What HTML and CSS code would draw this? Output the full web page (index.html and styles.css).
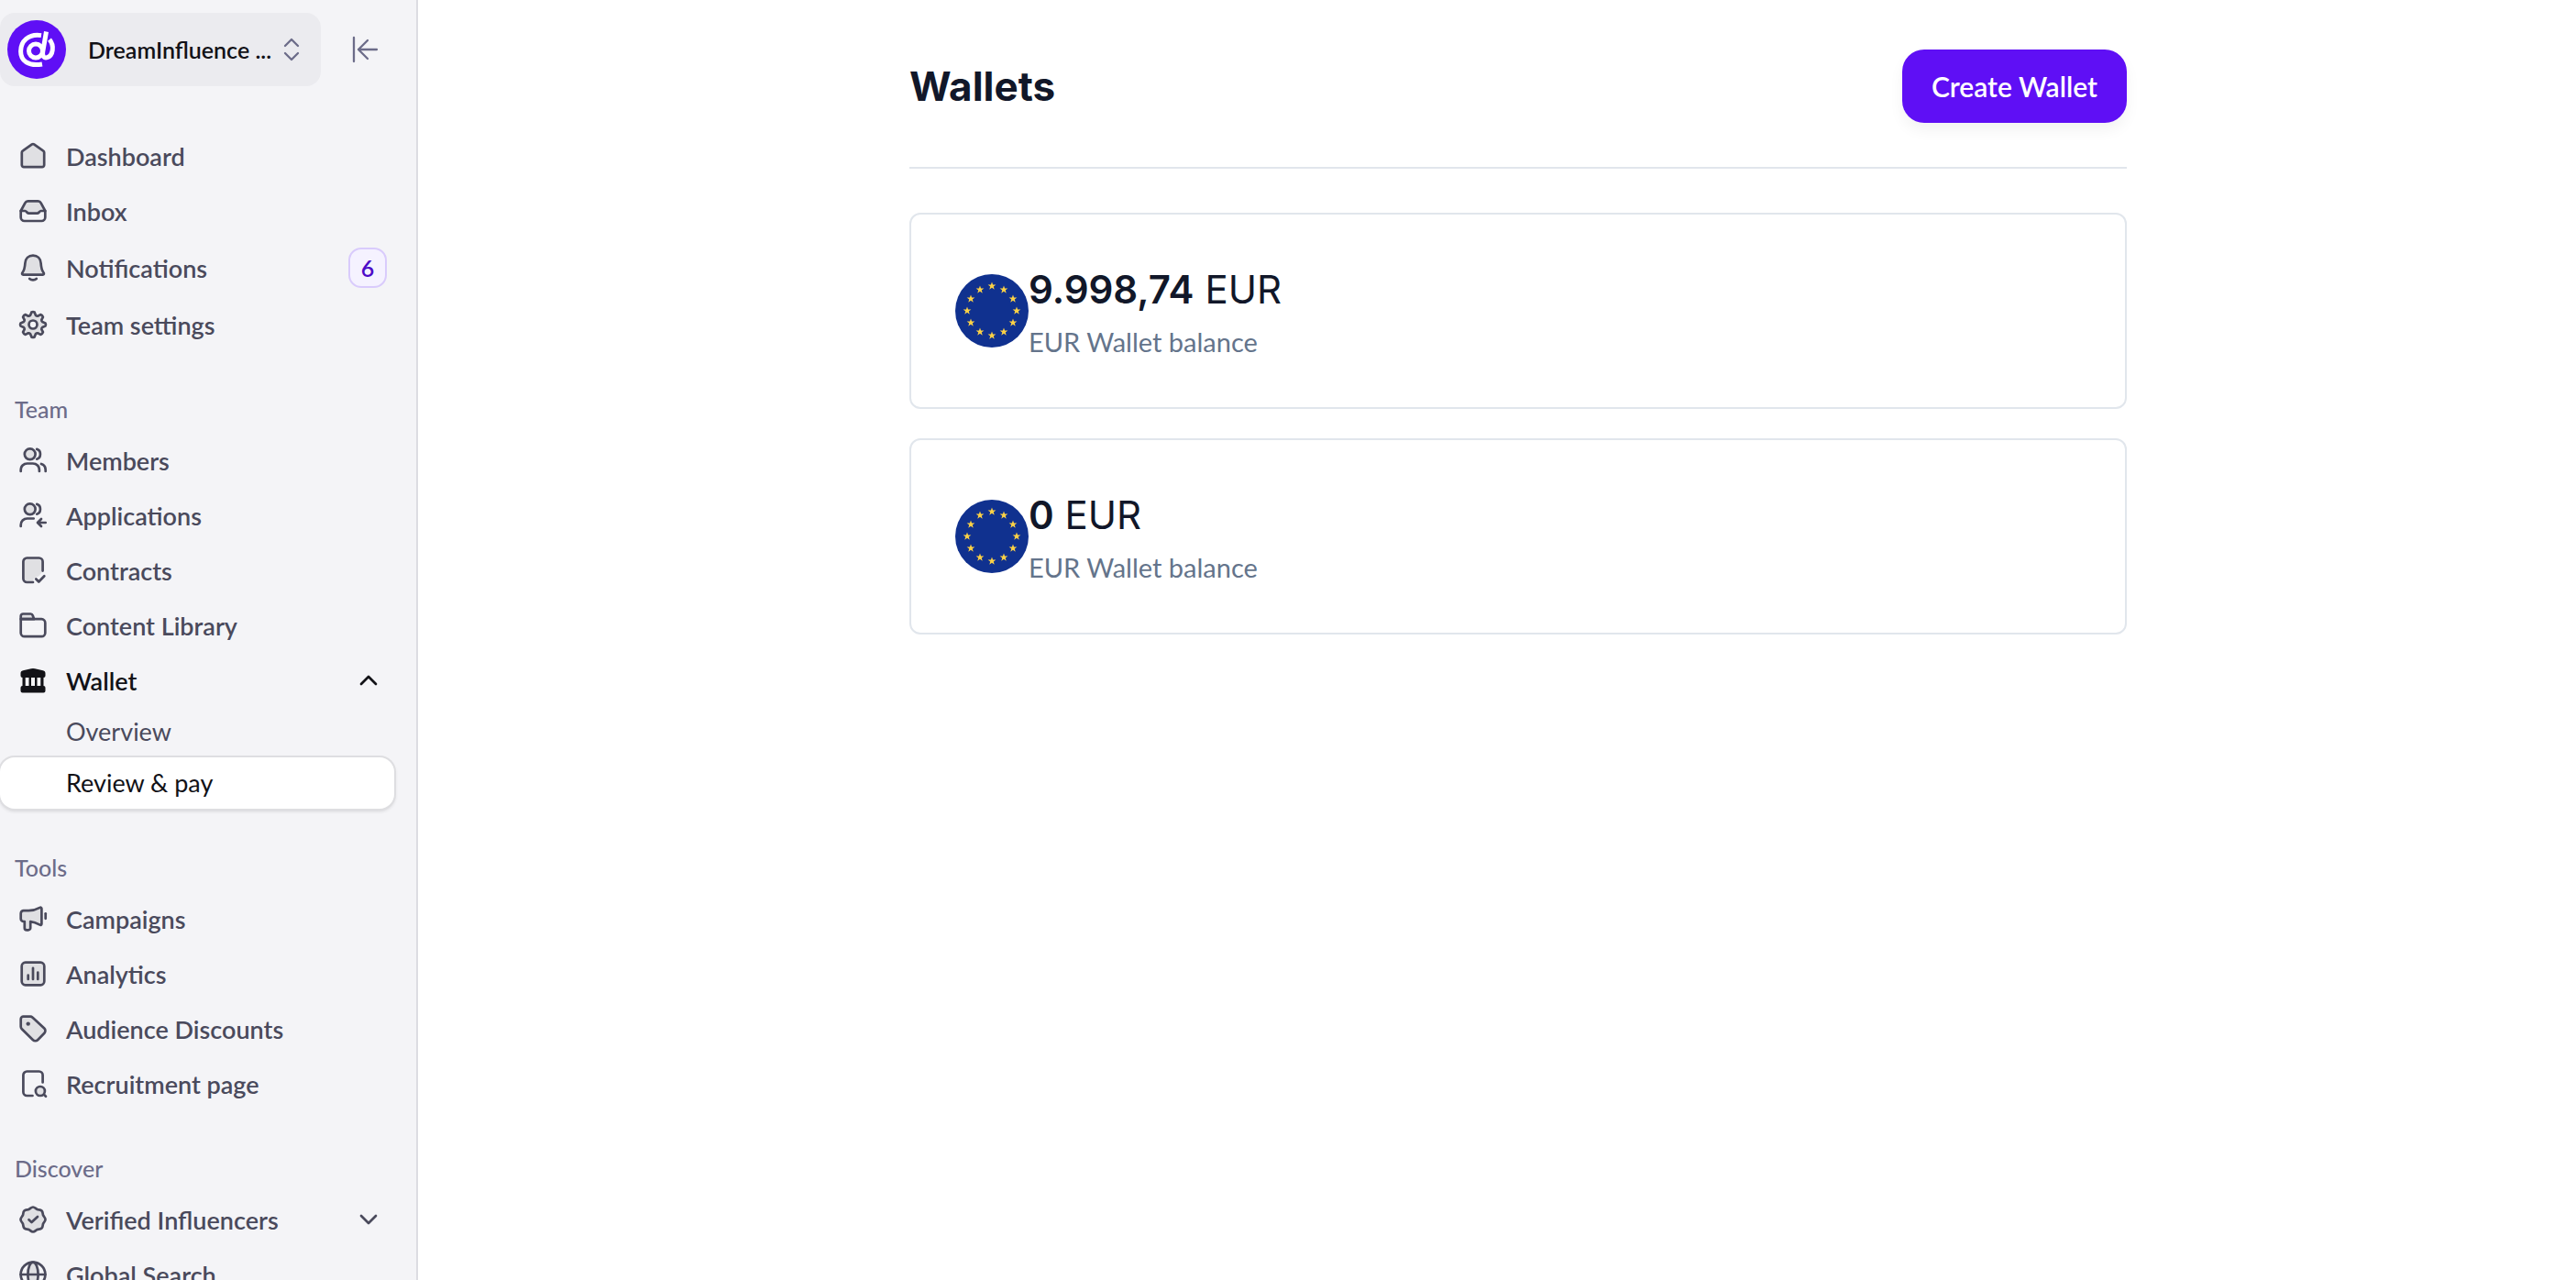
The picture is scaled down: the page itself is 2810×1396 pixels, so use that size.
FILE: index.html
```
<!DOCTYPE html>
<html lang="en">
<head>
  <meta charset="UTF-8">
  <title>Wallets</title>
  <link rel="stylesheet" href="styles.css">
</head>
<body>

<!-- star shared by both flags -->
<svg class="defs" aria-hidden="true">
  <defs>
    <path id="star" d="M0-4.6 1.1-1.5H4.4L1.8.5 2.7 3.7 0 1.8-2.7 3.7-1.8.5-4.4-1.5H-1.1z"/>
    <g id="eu-flag">
      <circle cx="40" cy="40" r="40" fill="#10318f"/>
      <g fill="#fbd146">
        <use href="#star" x="40" y="13"/>
        <use href="#star" x="53" y="17"/>
        <use href="#star" x="63" y="27"/>
        <use href="#star" x="67" y="40"/>
        <use href="#star" x="63" y="53"/>
        <use href="#star" x="53" y="63"/>
        <use href="#star" x="40" y="67"/>
        <use href="#star" x="27" y="63"/>
        <use href="#star" x="17" y="53"/>
        <use href="#star" x="13" y="40"/>
        <use href="#star" x="17" y="27"/>
        <use href="#star" x="27" y="17"/>
      </g>
    </g>
  </defs>
</svg>

<div class="app">
  <aside class="sidebar">
    <div class="sidebar-top">
      <button class="team-switcher" type="button">
        <svg class="logo" viewBox="0 0 64 64" aria-hidden="true">
          <circle cx="32" cy="32" r="32" fill="#5f0ff5"/>
          <g fill="none" stroke="#fff" stroke-width="5" stroke-linecap="butt">
            <path d="M37 16.600C23 14.500 14.600 23 14.600 34c0 10.500 8.400 16.600 23.400 14"/>
            <circle cx="31" cy="33.500" r="7.500"/>
            <path d="M42.500 12.500 38.700 34.500c-.8 5 1.800 7.200 4.800 6.200 6.500-2 8-13 2.500-19.500"/>
          </g>
        </svg>
        <span class="team-name">DreamInfluence ...</span>
        <svg class="updown" viewBox="0 0 24 32" aria-hidden="true"><path d="M5 12l7-7 7 7M5 20l7 7 7-7"/></svg>
      </button>
      <button class="collapse" type="button" aria-label="Collapse sidebar">
        <svg viewBox="0 0 32 32" aria-hidden="true"><path d="M4 3v26M29 16H9M19 6 9 16l10 10"/></svg>
      </button>
    </div>

    <nav>
      <ul class="menu">
        <li><a class="item" href="#">
          <svg class="icon" viewBox="0 0 32 32"><path class="tint" d="M14.900 3.400 5 10.300c-.8.500-1.200 1.200-1.200 2V26a2.200 2.200 0 0 0 2.200 2.200h20a2.200 2.200 0 0 0 2.200-2.200V12.300c0-.8-.4-1.500-1.200-2L17.100 3.400a1.900 1.900 0 0 0-2.200 0z"/></svg>
          <span>Dashboard</span></a></li>
        <li><a class="item" href="#">
          <svg class="icon" viewBox="0 0 32 32"><path class="tint" d="M2.700 16 7.500 7.200a3.500 3.500 0 0 1 3-1.900h11a3.500 3.500 0 0 1 3 1.900L29.300 16h-4.600c-1.600 0-2.200 2.700-4.200 2.700h-9c-2 0-2.600-2.700-4.200-2.700z"/><path d="M2.700 16v7a4 4 0 0 0 4 4h18.600a4 4 0 0 0 4-4v-7"/></svg>
          <span>Inbox</span></a></li>
        <li><a class="item tall" href="#">
          <svg class="icon" viewBox="0 0 32 32"><path class="tint" d="M16 2.600c-5 0-8.300 3.600-8.600 8.400-.3 5.200-1 7.800-3 10.500-.7 1-.2 2.100.9 2.100h21.400c1.100 0 1.600-1.100.9-2.100-2-2.700-2.700-5.300-3-10.500-.3-4.800-3.600-8.400-8.600-8.400z"/><path d="M12.200 28c2 1.800 5.600 1.800 7.600 0"/></svg>
          <span>Notifications</span><b class="badge">6</b></a></li>
        <li><a class="item" href="#">
          <svg class="icon" viewBox="-16 -16 32 32"><path class="tint" d="M13.500-1.600Q14.400 0 13.500 1.600L10.200 2.900Q9.200 3.800 9.300 5.100L10.900 8.200Q10.200 10.200 8.200 10.900L5.100 9.300Q3.800 9.200 2.900 10.200L1.600 13.500Q0 14.400-1.600 13.500L-2.900 10.200Q-3.800 9.200-5.100 9.300L-8.200 10.900Q-10.200 10.200-10.900 8.200L-9.300 5.100Q-9.200 3.800-10.200 2.900L-13.500 1.600Q-14.400 0-13.500-1.600L-10.200-2.900Q-9.200-3.800-9.300-5.100L-10.900-8.200Q-10.200-10.200-8.200-10.900L-5.100-9.300Q-3.800-9.200-2.900-10.200L-1.600-13.500Q0-14.400 1.600-13.500L2.900-10.200Q3.800-9.200 5.100-9.300L8.200-10.900Q10.200-10.200 10.900-8.200L9.300-5.100Q9.200-3.800 10.200-2.900z"/><circle class="hole" r="4.500"/></svg>
          <span>Team settings</span></a></li>
      </ul>

      <h2 class="group">Team</h2>
      <ul class="menu">
        <li><a class="item" href="#">
          <svg class="icon" viewBox="0 0 32 32"><circle class="tint" cx="12.700" cy="9.300" r="5.900"/><path d="M20.200 3.900c5 1.300 5 9.500 0 10.800M2.700 28v-1.500c0-4 3-7 7-7h6.200c4 0 7 3 7 7V28M25 20c3 .8 4.700 3.300 4.700 6.500V28"/></svg>
          <span>Members</span></a></li>
        <li><a class="item" href="#">
          <svg class="icon" viewBox="0 0 32 32"><circle class="tint" cx="12.700" cy="9.300" r="5.900"/><path d="M20.200 3.900c5 1.300 5 9.500 0 10.800M2.700 28v-1.500c0-4 3-7 7-7h7M29.700 24h-8.400M25 20l-4 4 4 4"/></svg>
          <span>Applications</span></a></li>
        <li><a class="item" href="#">
          <svg class="icon" viewBox="0 0 32 32"><path class="wash" d="M9.400 2.500h13.200a4 4 0 0 1 4 4V17l-4 5-6 3v4H9.400a4 4 0 0 1-4-4V6.500a4 4 0 0 1 4-4z"/><path d="M16 29H9.400a4 4 0 0 1-4-4V6.500a4 4 0 0 1 4-4h13.200a4 4 0 0 1 4 4v10.100M19.300 25.500l3 3 6-6.200"/></svg>
          <span>Contracts</span></a></li>
        <li><a class="item" href="#">
          <svg class="icon" viewBox="0 0 32 32"><path class="tint" d="M2.700 9.200V6a2.500 2.500 0 0 1 2.500-2.500h8.300c1.200 0 1.800.6 2.200 1.700l1.500 4z"/><path d="M2.700 9.200h22.600a4 4 0 0 1 4 4v11a4 4 0 0 1-4 4H6.700a4 4 0 0 1-4-4z"/></svg>
          <span>Content Library</span></a></li>
        <li><button class="item current" type="button" aria-expanded="true">
          <svg class="icon" viewBox="0 0 32 32"><path class="solid" d="M2.500 8.500c0-2 .8-2.900 2.600-3.300L14 3.200a9 9 0 0 1 4 0l8.900 2c1.800.4 2.600 1.300 2.600 3.300V11a2 2 0 0 1-2 2v9a2 2 0 0 1 2 2v3.500a2 2 0 0 1-2 2h-23a2 2 0 0 1-2-2V24a2 2 0 0 1 2-2v-9a2 2 0 0 1-2-2zM7.700 13v9h3.800v-9zM14 13v9h4v-9zM20.500 13v9h3.800v-9z"/></svg>
          <span>Wallet</span>
          <svg class="chevron" viewBox="0 0 40 32"><path d="M12 20l8-8 8 8"/></svg></button>
          <ul class="submenu">
            <li><a class="subitem" href="#">Overview</a></li>
            <li><a class="subitem active" href="#" aria-current="page">Review &amp; pay</a></li>
          </ul>
        </li>
      </ul>

      <h2 class="group">Tools</h2>
      <ul class="menu">
        <li><a class="item" href="#">
          <svg class="icon" viewBox="0 0 32 32"><path class="tint" d="M5.700 7.200h5.500c5 0 9-1.500 12.300-3.300 1-.5 1.900 0 1.900 1.100v16.600c0 1.100-.9 1.500-1.900 1-3.200-1.700-6.500-3.100-10.300-3.600v6.900a2.400 2.400 0 0 1-2.400 2.400H9.200a2.400 2.400 0 0 1-2.400-2.400v-6.900H5.700a3 3 0 0 1-3-3v-5.800a3 3 0 0 1 3-3z"/><path d="M29.700 10.300v5.500"/></svg>
          <span>Campaigns</span></a></li>
        <li><a class="item" href="#">
          <svg class="icon" viewBox="0 0 32 32"><rect class="tint" x="3.700" y="3.700" width="24.600" height="24.600" rx="4"/><path d="M10.700 17.700V22M16 9.800V22M21.300 14.500V22"/></svg>
          <span>Analytics</span></a></li>
        <li><a class="item" href="#">
          <svg class="icon" viewBox="0 0 32 32"><path class="tint" d="M5.500 2.700h7.600c1 0 1.800.4 2.500 1l12.700 11.900a3.600 3.600 0 0 1 .1 5.100l-7.300 7.500a3.600 3.600 0 0 1-5.100 0L3.800 16.300a3.600 3.600 0 0 1-1.100-2.500V5.500a2.800 2.800 0 0 1 2.800-2.800z"/><circle class="solid" cx="10.700" cy="10.600" r="2.200"/></svg>
          <span>Audience Discounts</span></a></li>
        <li><a class="item" href="#">
          <svg class="icon" viewBox="0 0 32 32"><path d="M15.500 29H9.400a4 4 0 0 1-4-4V6.500a4 4 0 0 1 4-4h13.200a4 4 0 0 1 4 4v8M27.500 27.300l2.500 2.500"/><circle class="tint" cx="23.900" cy="24" r="5"/></svg>
          <span>Recruitment page</span></a></li>
      </ul>

      <h2 class="group">Discover</h2>
      <ul class="menu">
        <li><button class="item" type="button" aria-expanded="false">
          <svg class="icon" viewBox="-16 -16 32 32"><path class="tint" d="M0-13.500C2-13.500 3-11.800 4.600-11.100S8-11.100 9.500-9.500 10.400-6.200 11.100-4.600 13.500-2 13.500 0 11.800 3 11.100 4.600 11.100 8 9.500 9.500 6.200 10.400 4.600 11.100 2 13.500 0 13.500-3 11.800-4.600 11.100-8 11.100-9.500 9.500-10.400 6.200-11.100 4.600-13.500 2-13.500 0-11.800-3-11.100-4.600-11.100-8-9.500-9.500-6.200-10.400-4.600-11.100-2-13.500 0-13.500z"/><path d="M-4.500.2l3 2.900L5-3.100"/></svg>
          <span>Verified Influencers</span>
          <svg class="chevron" viewBox="0 0 40 32"><path d="M12 12l8 8 8-8"/></svg></button></li>
        <li><a class="item" href="#">
          <svg class="icon" viewBox="0 0 32 32"><circle cx="16" cy="16" r="13.400"/><ellipse class="tint" cx="16" cy="16" rx="5.600" ry="13.400"/><path d="M2.600 16h26.800"/></svg>
          <span>Global Search</span></a></li>
      </ul>
    </nav>
  </aside>

  <main class="main">
    <div class="content">
      <header class="page-header">
        <h1>Wallets</h1>
        <button class="btn" type="button">Create Wallet</button>
      </header>

      <section class="card">
        <svg class="flag" viewBox="0 0 80 80" role="img" aria-label="EU flag"><use href="#eu-flag"/></svg>
        <div>
          <p class="amount"><strong>9.998,74</strong> EUR</p>
          <p class="caption">EUR Wallet balance</p>
        </div>
      </section>

      <section class="card">
        <svg class="flag" viewBox="0 0 80 80" role="img" aria-label="EU flag"><use href="#eu-flag"/></svg>
        <div>
          <p class="amount"><strong>0</strong> EUR</p>
          <p class="caption">EUR Wallet balance</p>
        </div>
      </section>
    </div>
  </main>
</div>

</body>
</html>
```
FILE: styles.css
```
* {
  box-sizing: border-box;
  margin: 0;
  padding: 0;
}
body {
  background: #fff;
  color: #121217;
  font-family: Lato, "Open Sans", sans-serif;
}
ul { list-style: none; }
a { color: inherit; text-decoration: none; }
button {
  font: inherit;
  color: inherit;
  background: none;
  border: 0;
  text-align: left;
  cursor: pointer;
}
svg {
  display: block;
  flex: none;
  fill: none;
  stroke: currentColor;
  stroke-width: 2.3;
  stroke-linecap: round;
  stroke-linejoin: round;
}
.defs { position: absolute; width: 0; height: 0; }

.app {
  display: flex;
  height: 100vh;
  overflow: hidden;
}

/* sidebar */
.sidebar {
  flex: none;
  width: 456px;
  padding: 14px 24px 0 0;
  background: #f4f4f7;
  border-right: 2px solid #dcdce2;
  overflow: hidden;
}
.sidebar-top {
  display: flex;
  align-items: center;
  justify-content: space-between;
  margin-bottom: 48px;
  padding-right: 16px;
}
.team-switcher {
  display: flex;
  align-items: center;
  width: 350px;
  padding: 8px;
  border-radius: 16px;
  background: #ebebef;
}
.logo { width: 64px; height: 64px; stroke: none; }
.team-name {
  flex: 1;
  padding-left: 24px;
  font-size: 25px;
  font-weight: 600;
  white-space: nowrap;
}
.updown { width: 24px; height: 32px; margin-right: 12px; color: #6c6c89; }
.collapse svg { width: 32px; height: 32px; color: #6c6c89; }

.menu {
  display: flex;
  flex-direction: column;
  gap: 4px;
}
.item {
  display: flex;
  align-items: center;
  gap: 20px;
  width: 100%;
  height: 56px;
  padding: 0 8px 0 20px;
  color: #4a4a5c;
  font-size: 27px;
  font-weight: 600;
}
.item span { flex: 1; }
.tall { height: 60px; }
.current { color: #121217; }
.icon, .chevron { stroke-width: 2.7; }
.icon { width: 32px; height: 32px; }
.tint { fill: #e0e0e3; }
.wash { fill: #e0e0e3; stroke: none; }
.hole { fill: #f4f4f7; }
.solid { fill: currentColor; stroke: none; }
.chevron { width: 40px; height: 32px; }
.badge {
  width: 42px;
  height: 44px;
  border: 2px solid #d9cbfc;
  border-radius: 14px;
  background: #f5f2ff;
  color: #4d0bc7;
  font-size: 25px;
  font-weight: 600;
  line-height: 40px;
  text-align: center;
}
.subitem {
  display: block;
  padding-left: 72px;
  color: #4a4a5c;
  font-size: 27px;
  line-height: 56px;
}
.active {
  border-radius: 16px;
  background: #fff;
  color: #121217;
  box-shadow: 0 0 0 2px #dedee1, 0 2px 4px rgba(18, 18, 23, 0.2);
}
.group {
  margin: 48px 0 12px;
  padding-left: 16px;
  color: #6c6c89;
  font-size: 25px;
  font-weight: 500;
  line-height: 32px;
}

/* main area */
.main {
  flex: 1;
  padding: 54px 0 0 46px;
}
.content {
  max-width: 1328px;
  margin: 0 auto;
}
.page-header {
  display: flex;
  align-items: center;
  justify-content: space-between;
  margin-bottom: 48px;
  padding-bottom: 48px;
  border-bottom: 2px solid #e1e6ec;
}
h1 {
  color: #111729;
  font-family: Inter, sans-serif;
  font-size: 44px;
  font-weight: 700;
}
.btn {
  height: 80px;
  padding: 0 32px;
  border-radius: 24px;
  background: #5f0ff5;
  box-shadow: 0 8px 16px rgba(0, 0, 0, 0.05);
  color: #fff;
  font-size: 30px;
  font-weight: 600;
}
.card {
  display: flex;
  align-items: center;
  margin-bottom: 32px;
  padding: 48px;
  border: 2px solid #e1e6ec;
  border-radius: 12px;
}
.flag { width: 80px; height: 80px; stroke: none; }
.amount {
  color: #111729;
  font-family: Inter, sans-serif;
  font-size: 42px;
  line-height: 68px;
}
.amount strong { font-weight: 600; }
.caption {
  color: #64748b;
  font-size: 29px;
  line-height: 46px;
}
```
